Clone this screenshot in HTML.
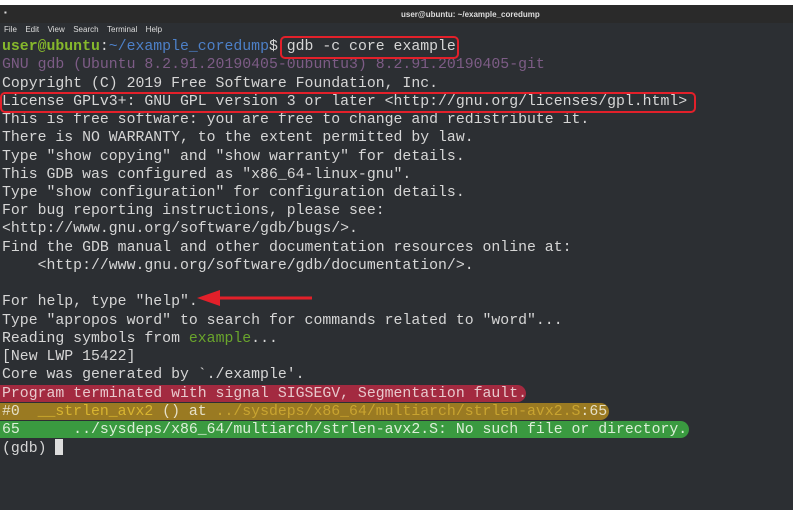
<!DOCTYPE html>
<html><head><meta charset="utf-8"><style>
html,body{margin:0;padding:0}
body{width:793px;height:510px;background:#2c2f33;position:relative;overflow:hidden;font-family:"Liberation Mono","DejaVu Sans Mono",monospace;}
.top{position:absolute;left:0;top:0;width:793px;height:5px;background:#fff}
.title{position:absolute;left:0;top:5px;width:793px;height:18px;background:#2a2a2a;color:#ddd;font:bold 8px "Liberation Sans",sans-serif;}
.menu{position:absolute;left:4px;top:25px;color:#ddd;font:8px "Liberation Sans",sans-serif;word-spacing:2px}
.l{position:absolute;left:2px;font-size:14.83px;line-height:18px;height:18px;color:#d6d6d6;white-space:pre}
.hl{position:absolute;left:0;height:17px;border-radius:0 9px 9px 0}
.box{position:absolute;border:2px solid #e3202a;border-radius:5px;box-sizing:border-box}
</style></head><body>
<div class="top"></div>
<div class="title"><span style="position:absolute;left:4px;top:3px">▪</span><span style="position:absolute;left:401px;top:5px">user@ubuntu: ~/example_coredump</span></div>
<div class="menu">File &nbsp;Edit &nbsp;View &nbsp;Search &nbsp;Terminal &nbsp;Help</div>
<div class="hl" style="top:385px;width:526px;background:#a32a40"></div>
<div class="hl" style="top:403px;width:609px;background:#9a7a22"></div>
<div class="hl" style="top:421px;width:689px;background:#3a9a40"></div>
<div class="l" style="top:38px"><b style="color:#86b82c">user@ubuntu</b>:<span style="color:#4d80c8">~/example_coredump</span>$ gdb -c core example</div>
<div class="l" style="top:56px;color:#7d5c86">GNU gdb (Ubuntu 8.2.91.20190405-0ubuntu3) 8.2.91.20190405-git</div>
<div class="l" style="top:75px">Copyright (C) 2019 Free Software Foundation, Inc.</div>
<div class="l" style="top:93px">License GPLv3+: GNU GPL version 3 or later &lt;http://gnu.org/licenses/gpl.html&gt;</div>
<div class="l" style="top:111px">This is free software: you are free to change and redistribute it.</div>
<div class="l" style="top:129px">There is NO WARRANTY, to the extent permitted by law.</div>
<div class="l" style="top:148px">Type "show copying" and "show warranty" for details.</div>
<div class="l" style="top:166px">This GDB was configured as "x86_64-linux-gnu".</div>
<div class="l" style="top:184px">Type "show configuration" for configuration details.</div>
<div class="l" style="top:202px">For bug reporting instructions, please see:</div>
<div class="l" style="top:220px">&lt;http://www.gnu.org/software/gdb/bugs/&gt;.</div>
<div class="l" style="top:239px">Find the GDB manual and other documentation resources online at:</div>
<div class="l" style="top:257px">    &lt;http://www.gnu.org/software/gdb/documentation/&gt;.</div>
<div class="l" style="top:293px">For help, type "help".</div>
<div class="l" style="top:312px">Type "apropos word" to search for commands related to "word"...</div>
<div class="l" style="top:330px">Reading symbols from <span style="color:#6aa52c">example</span>...</div>
<div class="l" style="top:348px">[New LWP 15422]</div>
<div class="l" style="top:366px">Core was generated by `./example'.</div>
<div class="l" style="top:385px;color:#e8c8cc">Program terminated with signal SIGSEGV, Segmentation fault.</div>
<div class="l" style="top:403px;color:#e6e0c8">#0  <span style="color:#d8b430">__strlen_avx2</span> () at <span style="color:#c9a430">../sysdeps/x86_64/multiarch/strlen-avx2.S</span>:65</div>
<div class="l" style="top:421px;color:#dcefd8">65      ../sysdeps/x86_64/multiarch/strlen-avx2.S: No such file or directory.</div>
<div class="l" style="top:439px">(gdb) <span style="display:inline-block;width:8px;height:16px;background:#ddd;vertical-align:-3px"></span></div>
<div class="box" style="left:280px;top:36px;width:179px;height:23px"></div>
<div class="box" style="left:0px;top:92px;width:696px;height:21px"></div>
<svg style="position:absolute;left:0;top:0" width="793" height="510"><line x1="215" y1="298" x2="312" y2="298" stroke="#e3202a" stroke-width="3"/><polygon points="197,298 220,290 220,306" fill="#e3202a"/></svg>
</body></html>
